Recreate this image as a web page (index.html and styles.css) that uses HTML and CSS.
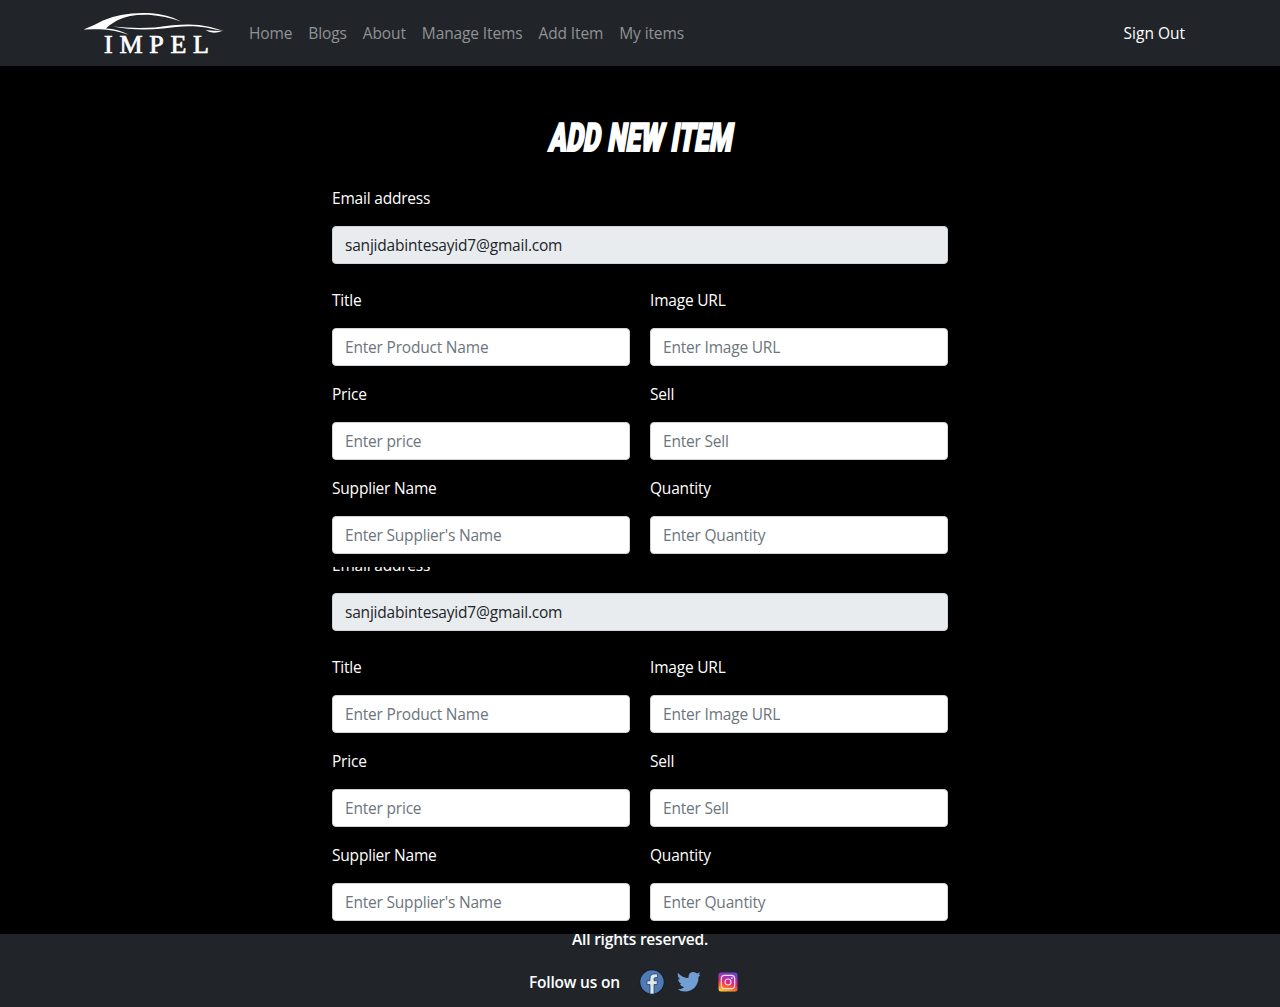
FILE: index.html
```html
<!DOCTYPE html>
<html lang="en">
<head>
<meta charset="utf-8">
<title>Impel</title>
<link rel="stylesheet" href="styles.css">
</head>
<body>
<header class="navbar">
  <a class="brand">
    <svg width="145" height="56" viewBox="80 5 145 56" fill="#fff">
      <path d="M83.500 29.500Q94 25.500 103 20.500Q121 12 149 13Q168 14 181 21.500Q165 16 149 14.700Q130 14 118 20Q109 25 106 28.500Q118 29 129 34.800Q113 29.500 100 29.300Q91 29 83.500 29.500Z"/>
      <path d="M113 26.500Q133 28.800 155 27.500C172 25 187 23.500 199 25Q212 26.500 224 31Q215 29.800 206 27.600C190 24.800 177 26.500 163 28.500Q135 31 113 26.500Z"/>
      <path d="M205.500 30Q213 31 222 31Q213 35 205.500 30Z"/>
      <text class="brand-name" x="104" y="52.800" textLength="105">IMPEL</text>
    </svg>
  </a>
  <nav class="nav">
    <a>Home</a><a>Blogs</a><a>About</a><a>Manage Items</a><a>Add Item</a><a>My items</a>
  </nav>
  <a class="sign-out">Sign Out</a>
</header>

<main>
  <section class="panel panel-first">
    <h1 class="title"><span>Add New Item</span></h1>
    <form class="form">
      <div class="field wide"><label>Email address</label><input class="email" value="sanjidabintesayid7@gmail.com" disabled></div>
      <div class="field"><label>Title</label><input placeholder="Enter Product Name"></div>
      <div class="field"><label>Image URL</label><input placeholder="Enter Image URL"></div>
      <div class="field"><label>Price</label><input placeholder="Enter price"></div>
      <div class="field"><label>Sell</label><input placeholder="Enter Sell"></div>
      <div class="field"><label>Supplier Name</label><input placeholder="Enter Supplier's Name"></div>
      <div class="field"><label>Quantity</label><input placeholder="Enter Quantity"></div>
    </form>
  </section>
  <section class="panel panel-next">
    <form class="form">
      <div class="field wide"><label>Email address</label><input class="email" value="sanjidabintesayid7@gmail.com" disabled></div>
      <div class="field"><label>Title</label><input placeholder="Enter Product Name"></div>
      <div class="field"><label>Image URL</label><input placeholder="Enter Image URL"></div>
      <div class="field"><label>Price</label><input placeholder="Enter price"></div>
      <div class="field"><label>Sell</label><input placeholder="Enter Sell"></div>
      <div class="field"><label>Supplier Name</label><input placeholder="Enter Supplier's Name"></div>
      <div class="field"><label>Quantity</label><input placeholder="Enter Quantity"></div>
    </form>
  </section>
</main>

<footer class="footer">
  <p class="rights">All rights reserved.</p>
  <div class="follow">
    <span>Follow us on</span>
    <svg class="facebook" width="26" height="26" viewBox="0 0 26 26">
      <circle cx="13" cy="13" r="12.300" fill="#4e7ab5" stroke="#171d25" stroke-width="1.200"/>
      <path d="M11 25V15.500H8V11.800H11V9.500Q11 5 15.300 5H18.500V8.600H16.300Q15 8.600 15 10V11.800H18.500L18 15.500H15V25Z" fill="#dce9ed" stroke="#22364c" stroke-width=".7"/>
    </svg>
    <svg class="twitter" width="24" height="22" viewBox="0 0 24 22">
      <path d="M1 2Q5.500 7 11.500 7C11.200 3 13.300 1 16.500 1Q18.500 1 20 2.500L23 1.300L21.600 4L23.500 3.500L21.500 6C21.500 15 15.500 20.500 8 20.500Q3.500 20.500 .8 18.300Q4.800 18.500 7.200 16.300Q3.700 15.500 2.700 12.800H4.700Q1.200 11.300 1.100 7.900L3.100 8.400Q-.2 5.500 1 2Z" fill="#729fd3"/>
    </svg>
    <svg class="instagram" width="20" height="20" viewBox="0 0 20 20">
      <defs>
        <linearGradient id="sunset" x1=".65" y1="0" x2=".35" y2="1"><stop stop-color="#6b45cf"/><stop offset=".28" stop-color="#a632bd"/><stop offset=".55" stop-color="#e5286c"/><stop offset=".78" stop-color="#f86b28"/><stop offset="1" stop-color="#ffc832"/></linearGradient>
      </defs>
      <rect x=".5" y=".5" width="19" height="19" rx="2.500" fill="url(#sunset)"/>
      <g fill="none" stroke="#f4dce6" stroke-width="1.200"><rect x="3.300" y="3.300" width="13.400" height="13.400" rx="3.500"/><circle cx="10" cy="10" r="3"/></g>
      <circle cx="13.900" cy="6.100" r=".9" fill="#f4dce6"/>
    </svg>
  </div>
</footer>
</body>
</html>
```
FILE: styles.css
```css
* { box-sizing: border-box; }
body {
  margin: 0;
  background: #000;
  color: #fff;
  font: 15.5px/24px "Open Sans", "Noto Sans", sans-serif;
  letter-spacing: -.2px;
}
.navbar {
  height: 66px;
  padding: 0 95px 0 80px;
  display: flex;
  align-items: center;
  background: #212529;
}
.brand { display: flex; }
.brand-name {
  font: 400 26px "Liberation Serif", serif;
  letter-spacing: 0;
  stroke: #fff;
  stroke-width: .7px;
}
.nav { display: flex; gap: 16px; margin-left: 24px; color: #909294; letter-spacing: -.12px; }
.sign-out { margin-left: auto; letter-spacing: 0; }
.panel { overflow: hidden; }
.panel-first { height: 501px; padding-top: 48px; }
.panel-next { height: 367px; }
.panel-next .form { margin-top: -14px; }
.title {
  height: 48px;
  margin: 0 0 24px;
  padding-left: 3px;
  text-align: center;
  font: 900 39px/48px Roboto, sans-serif;
  letter-spacing: 0;
  word-spacing: 2px;
  text-transform: uppercase;
}
.title span {
  display: inline-block;
  transform: scaleX(.665) skewX(-14deg);
  -webkit-text-stroke: 2px #fff;
}
.form {
  width: 616px;
  margin: 0 auto;
  display: grid;
  grid-template-columns: 1fr 1fr;
  gap: 16px 20px;
}
.field { display: flex; flex-direction: column; gap: 16px; }
.wide { grid-column: span 2; margin-bottom: 8px; }
input {
  width: 100%;
  height: 38px;
  padding: 6px 12px;
  border: 1px solid #ced4da;
  border-radius: 4px;
  background: #fff;
  font: inherit;
  letter-spacing: inherit;
}
input::placeholder { color: #6c757d; }
.email { background: #e9ecef; color: #212529; }
.footer {
  height: 73px;
  overflow: hidden;
  background: #212529;
  font-weight: 600;
}
.rights { margin: -7px 0 19px; text-align: center; }
.follow { display: flex; align-items: center; height: 24px; padding-left: 529px; }
.follow span { width: 92px; white-space: nowrap; }
.facebook { margin-left: 18px; }
.twitter { margin-left: 12px; }
.instagram { margin-left: 17px; }
```
